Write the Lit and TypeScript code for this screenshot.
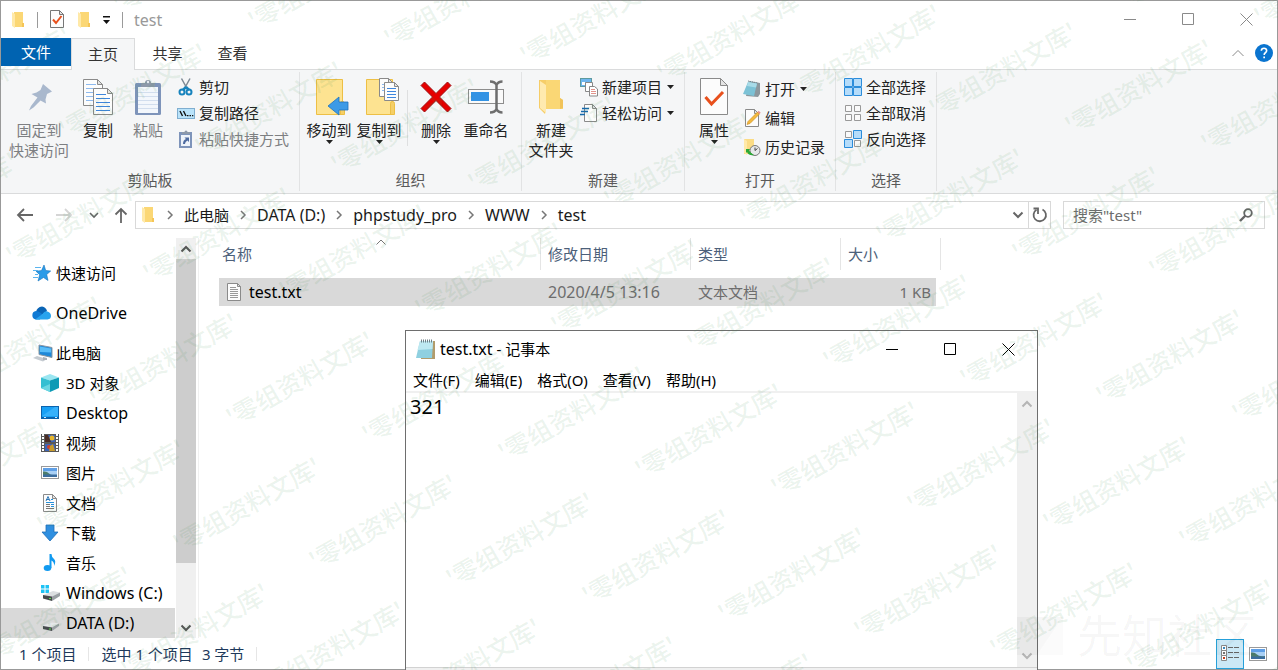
import { LitElement, html, svg, css, nothing, TemplateResult, SVGTemplateResult } from "lit";
import { customElement, property } from "lit/decorators.js";

/* ---------- icon drawings: [viewBox width, viewBox height, shapes] ---------- */
type Drawing = [number, number, SVGTemplateResult];

const page = (x: number, y: number, w: number, h: number, fold: number, stroke = "#8a8a8a") => svg`
  <path d="M${x} ${y}H${x + w - fold}L${x + w} ${y + fold}V${y + h}H${x}Z" fill="#fcfcfc" stroke=${stroke}/>
  <path d="M${x + w - fold} ${y}V${y + fold}H${x + w}Z" fill="#e4e4e4" stroke=${stroke}/>`;

const landscape = (x: number, y: number, w: number, h: number) => svg`
  <rect x=${x} y=${y} width=${w} height=${h} fill="#fff" stroke="#9a9a9a"/>
  <rect x=${x + 1.5} y=${y + 1.5} width=${w - 3} height=${h - 3} fill="#a9d0f5"/>
  <rect x=${x + 1.5} y=${y + 1.5} width=${w - 3} height="3" fill="#5f9fe6"/>
  <path d="M${x + 1.5} ${y + 5}q4 -.5 6 2t${w - 9} 1.500V${y + h - 3.5}H${x + 1.5}Z" fill="#4d7d6c"/>
  <rect x=${x + 1.5} y=${y + h - 4} width=${w - 3} height="2.500" fill="#3b6d9e"/>`;

const ICONS: Record<string, Drawing> = {
  folder: [16, 18, svg`
    <path d="M4 1h9v13l1 1v1H4z" fill="#fbd775"/>
    <path d="M2 1l3 2v14l-3-2z" fill="#ffe9a8"/>
    <path d="M12 12h2v4h-2z" fill="#f5c557"/>`],
  checkDoc: [16, 19, svg`
    ${page(1.5, 0.5, 13, 17, 4, "#777")}
    <path d="M4 9.500l3 3.500 5.500-7" fill="none" stroke="#e8501c" stroke-width="2"/>`],
  caret: [7, 4, svg`<path d="M0 0h7l-3.500 4z" fill="#222"/>`],
  quickCaret: [8, 8, svg`<path d="M0 0h7v1.500H0zM0 4h7L3.500 8z" fill="#111"/>`],
  minimize: [13, 13, svg`<path d="M0 6.500h12" stroke="currentColor"/>`],
  maximize: [13, 13, svg`<path d="M.5.5h11v11H.5z" fill="none" stroke="currentColor"/>`],
  close: [13, 13, svg`<path d="M.5.5l12 12M12.500.5l-12 12" stroke="currentColor" fill="none"/>`],
  chevUp: [12, 8, svg`<path d="M.5 7L6 1.500 11.500 7" fill="none" stroke="currentColor"/>`],
  sorted: [10, 6, svg`<path d="M.5 5.500L5 1l4.500 4.500" fill="none" stroke="currentColor"/>`],
  scrollUp: [12, 8, svg`<path d="M1.500 6.500L6 2l4.500 4.500" fill="none" stroke="currentColor" stroke-width="2"/>`],
  scrollDown: [12, 8, svg`<path d="M1.500 1.500L6 6l4.500-4.500" fill="none" stroke="currentColor" stroke-width="2"/>`],
  recent: [10, 8, svg`<path d="M1 2l4 4 4-4" fill="none" stroke="currentColor" stroke-width="1.600"/>`],
  crumb: [6, 10, svg`<path d="M1 1l4 4-4 4" fill="none" stroke="currentColor" stroke-width="1.500"/>`],
  help: [18, 18, svg`
    <circle cx="9" cy="9" r="9" fill="#0a74cf"/>
    <path d="M6.300 6.800q.2-2.500 2.700-2.500t2.700 2.300q0 1.300-1.300 2.100T9.200 11" fill="none" stroke="#fff" stroke-width="1.600"/>
    <path d="M8.300 12.500h1.700v1.700H8.300z" fill="#fff"/>`],
  pin: [28, 28, svg`
    <path d="M18 1l9 7.500-3 1.500-2 1-1.500 5.500.5 4-5.500-3-7 7-4.500 3L6 23l6.500-8.500L6.500 11l5-1.500 4-2.500z" fill="#a9b8cd"/>`],
  copy: [32, 37, svg`
    ${page(1.5, 0.5, 19, 26, 5)}
    <path d="M4 5.500h10M4 9.500h14M4 13.500h8M4 17.500h8M4 21.500h8" stroke="#8db9ee"/>
    ${page(11.5, 9.5, 19, 26, 5)}
    <path d="M14 15.500h10M14 19.500h14M14 23.500h14M14 27.500h14M14 31.500h14" stroke="#3e86dd"/>`],
  paste: [28, 37, svg`
    <rect x="1" y="4" width="26" height="32" rx="1.500" fill="#7e94ba"/>
    <rect x="4" y="8" width="20" height="26" fill="#f3f7fc"/>
    <path d="M4 13.500h20M4 17.500h20M4 21.500h20M4 25.500h20M4 29.500h20" stroke="#d2deee"/>
    <path d="M7 4h4a3 3 0 016 0h4v4H7z" fill="#8d99aa"/><circle cx="14" cy="3" r="1.200" fill="#e7ebf1"/>`],
  cut: [18, 18, svg`
    <path d="M4.500.5l5.500 10M13 .5l-5.500 10" stroke="#7d8994" stroke-width="1.500" fill="none"/>
    <path d="M9 9l-3 3M9 9l3 3" stroke="#1783bd" stroke-width="2.500"/>
    <circle cx="5" cy="14" r="2.500" fill="none" stroke="#1783bd" stroke-width="2"/>
    <circle cx="12" cy="14" r="2.500" fill="none" stroke="#1783bd" stroke-width="2"/>`],
  copyPath: [18, 18, svg`
    <rect x=".5" y="4.500" width="17" height="10" fill="#b9e3fa" stroke="#7faed0"/>
    <path d="M3 7l2.500 5M6.500 7L9 12" stroke="#111" stroke-width="1.400"/>
    <path d="M10 11h1.500v1.200H10zM12.500 11H14v1.200h-1.500zM15 11h1.300v1.200H15z" fill="#111"/>`],
  pasteLink: [18, 18, svg`
    <rect x="2" y="2" width="13" height="16" fill="#7e94ba"/>
    <rect x="4" y="5" width="9" height="11" fill="#eef3fa"/>
    <path d="M5 2h2.500a1.500 1.500 0 013 0H13v2H5z" fill="#8d99aa"/>
    <path d="M6 14q0-4 3-5L7.500 7.500H12V12l-1.500-1.500Q8 11.500 8 14z" fill="#4e6ba0"/>`],
  moveTo: [28, 38, svg`
    <path d="M1.500 1.500h26v35h-26z" fill="#fde391" stroke="#edbf45"/>
    <path d="M25.500 36.500v-11q0-2 2-2t2 2v11z" fill="#f5cf67" stroke="#edbf45"/>
    <path d="M33 24v8h-9v5L13 28l11-9v5z" fill="#3d9ae6" stroke="#1f72bd" stroke-width=".8"/>`],
  copyTo: [28, 38, svg`
    <path d="M1.500 1.500h26v35h-26z" fill="#fde391" stroke="#edbf45"/>
    <path d="M25.500 36.500v-11q0-2 2-2t2 2v11z" fill="#f5cf67" stroke="#edbf45"/>
    ${page(14.5, 0.5, 13, 18, 4)}
    <path d="M17 6.500h8M17 9.500h8M17 12.500h8" stroke="#8db9ee"/>
    ${page(19.5, 4.5, 14, 18, 4)}
    <path d="M22 10.500h9M22 13.500h9M22 16.500h9M22 19.500h9" stroke="#3e86dd"/>`],
  remove: [32, 32, svg`
    <path d="M4.500 1L16 12.500 27.500 1 31 4.500 19.500 16 31 27.500 27.500 31 16 19.500 4.500 31 1 27.500 12.500 16 1 4.500z" fill="#e60000" stroke="#9c0f12"/>`],
  rename: [36, 34, svg`
    <rect x=".5" y="9.500" width="35" height="14" fill="#fafafa" stroke="#8d8d8d"/>
    <rect x="3" y="12" width="18" height="9" fill="#3393e4"/>
    <path d="M22 1.500q5 0 6.500 3.500 1.500-3.500 6-3.500M22 32.500q5 0 6.500-3.500 1.500 3.500 6 3.500M28.500 4v26" fill="none" stroke="#6e6e6e" stroke-width="2.500"/>`],
  newFolder: [26, 36, svg`
    <path d="M8 1h14v18l3 2v9H8z" fill="#fad775"/>
    <path d="M22 19l3 2v8l-3 1z" fill="#f1c35a"/>
    <path d="M1 1h7v29l-1 5-6-6z" fill="#f6cd68"/>
    <path d="M2 2l6 4v28l-6-5z" fill="#ffeaaf"/>`],
  newItem: [18, 18, svg`
    <rect x=".5" y=".5" width="11" height="8" fill="#6fb6ee" stroke="#5d9a9f"/>
    <rect x="2" y="4" width="3" height="3" fill="#fff"/>
    <path d="M5.500 4.500h7v9h-7z" fill="#fff" stroke="#888"/>
    <path d="M9.500 8.500h5l3 2.500v7h-8z" fill="#fff" stroke="#888"/>
    <path d="M11 11.500h4M11 13.500h5M11 15.500h5" stroke="#e2938b"/>`],
  easyAccess: [18, 18, svg`
    ${page(4.5, 0.5, 12, 17, 4)}
    <path d="M2 4.500h7M1 7.500h7M0 10.500h5" stroke="#1669ad" stroke-width="1.300"/>`],
  properties: [30, 38, svg`
    ${page(1.5, 0.5, 27, 36, 7)}
    <path d="M6.500 19l6 7L24 14" fill="none" stroke="#e8501c" stroke-width="3"/>`],
  open: [18, 18, svg`
    <path d="M6 1l11 2v11l-2 3-12-1z" fill="#8c979d"/>
    <path d="M5 2l9 1.500-3 12.500L0 14z" fill="#7cc2d6"/>
    <path d="M5 2l9 1.500-1 4-9-1.500z" fill="#a8dbe8"/>
    <path d="M5 1l10 2" stroke="#6d8790" stroke-dasharray="1 1"/>`],
  edit: [18, 18, svg`
    ${page(2.5, 0.5, 13, 17, 4)}
    <path d="M4 15.500l1-3L14.500 3l2 2L7 14.500z" fill="#f3b93e" stroke="#c98a1e" stroke-width=".6"/>
    <path d="M14.500 3l1.200-1.200 2 2L16.500 5z" fill="#e88f8f"/>`],
  history: [18, 18, svg`
    <path d="M1 1h10v15H1z" fill="#fbdc85"/><path d="M1 1l3 2v14l-3-2z" fill="#ffe9a8"/>
    <circle cx="12" cy="12.500" r="5" fill="#e6e8ea" stroke="#777"/>
    <path d="M12 9.500v3l2.500-2" stroke="#444" fill="none"/>
    <path d="M3 11h4l-1 1.500q2 3 5 4.500-5 1-7-3L3 15z" fill="#2aa836"/>`],
  selectAll: [18, 18, svg`
    <path d="M.5.5h8v8h-8zM9.500.5h8v8h-8zM.5 9.500h8v8h-8zM9.500 9.500h8v8h-8z" fill="#b5dcfa" stroke="#2b8ddb"/>`],
  selectNone: [18, 18, svg`
    <path d="M1.500 1.500h6v6h-6zM10.500 1.500h6v6h-6zM1.500 10.500h6v6h-6zM10.500 10.500h6v6h-6z" fill="#fafafa" stroke="#999"/>`],
  invert: [18, 18, svg`
    <path d="M1.500 1.500h6v6h-6zM10.500 10.500h6v6h-6z" fill="#fafafa" stroke="#999"/>
    <path d="M9.500.5h8v8h-8zM.5 9.500h8v8h-8z" fill="#b5dcfa" stroke="#2b8ddb"/>`],
  back: [18, 14, svg`<path d="M16 7H1M7 1L1 7l6 6" fill="none" stroke="currentColor" stroke-width="1.800"/>`],
  forward: [18, 14, svg`<path d="M1 7h15M10 1l6 6-6 6" fill="none" stroke="currentColor" stroke-width="1.800"/>`],
  up: [14, 16, svg`<path d="M6 16V2M0.500 7.500L6 2l5.500 5.500" fill="none" stroke="currentColor" stroke-width="1.800"/>`],
  refresh: [16, 16, svg`
    <path d="M10.500 2.500a6.200 6.200 0 11-6 .3" fill="none" stroke="currentColor" stroke-width="1.800"/>
    <path d="M1.500 1.500h4.500V7" fill="none" stroke="currentColor" stroke-width="1.800"/>`],
  search: [14, 14, svg`
    <circle cx="9" cy="5" r="3.800" fill="none" stroke="currentColor" stroke-width="1.800"/>
    <path d="M6.500 7.500L1 13" stroke="currentColor" stroke-width="2.400"/>`],
  star: [20, 18, svg`
    <path d="M13 1l1.700 5.500 5 .5-4 3.500 1.300 6L12.500 13.500 7 17l1.700-6.300L5 7.200l5.500-.6z" fill="#2a9be8" stroke="#1673bd" stroke-width=".6"/>
    <path d="M4 3.500h6M2 6.500h5M4 10.500h3M2 13.500h5" stroke="#5bb4ee"/>`],
  onedrive: [20, 14, svg`
    <path d="M5 6q1-5 6-5.500Q15 1 16 5l-5 4z" fill="#0a64b5"/>
    <path d="M5 13.500a4.300 4.300 0 010-8.500q3 0 6 3l-2 5.500z" fill="#0f7ad4"/>
    <path d="M4 13.500L11.500 8q2-3.500 5-2.500 3.500 1 3.500 4.500 0 3-3.500 3.500z" fill="#27a3ee"/>`],
  pc: [20, 18, svg`
    <path d="M8 1l13 2.500v10L8 10.500z" fill="#1d88d8" stroke="#8a97a3"/>
    <path d="M9 2.500l11 2v4L9 8z" fill="#58bdf8"/>
    <path d="M2 14L6 12l10 3-4 2.500z" fill="#c5cbd1"/><path d="M12 13l4 1v2h-4z" fill="#a9b1b8"/>`],
  cube: [18, 18, svg`
    <path d="M0 3.500L9 0l9 3.500L9 6.500z" fill="#9be6f1"/><path d="M0 3.500l9 3V18l-9-4z" fill="#35bfd2"/><path d="M18 3.500l-9 3V18l9-4z" fill="#0d9ab5"/>
    <path d="M0 14l9-4v8z" fill="#6bd6e2"/>`],
  desktop: [18, 18, svg`
    <rect x=".5" y="2.500" width="17" height="12" fill="#18a0f5" stroke="#0b63ae"/><path d="M1 12L14 3h3v9z" fill="#37b1fb"/>
    <path d="M1 13.500h16" stroke="#0b63ae"/><path d="M3 13.500h2M14 13.500h2" stroke="#cfe8fa"/>`],
  video: [18, 18, svg`
    <rect width="18" height="18" fill="#5a5a5a"/>
    <path d="M2 0v18M16 0v18" stroke="#fff" stroke-width="2" stroke-dasharray="2 1"/>
    <rect x="4" y="1" width="10" height="7" fill="#3c64b8"/><rect x="4" y="10" width="10" height="7" fill="#3c64b8"/>
    <circle cx="11" cy="4" r="2.500" fill="#e7b62c"/><path d="M4 1h3l3 7H4z" fill="#4b2d25"/>
    <circle cx="8" cy="13" r="2" fill="#d0402b"/><path d="M9 12l3-2 2 7h-6z" fill="#c99b2a"/>`],
  picture: [18, 18, landscape(0.5, 2.5, 17, 12)],
  document: [18, 18, svg`
    ${page(2.5, 0.5, 13, 17, 4)}
    <path d="M5 7l2-4.500L9 7M5 5.500h3" stroke="#2f78b7" fill="none"/>
    <path d="M10 5.500h2M5 8.500h8M10 12.500h3M10 10.500h3" stroke="#2591db"/><path d="M5 10.500h4M5 12.500h4M5 14.500h8" stroke="#777"/>`],
  download: [18, 18, svg`<path d="M5 1h8v7h4l-8 9-8-9h4z" fill="#2f8fe0" stroke="#1f6fb8" stroke-width=".8"/>`],
  music: [18, 18, svg`
    <ellipse cx="6.500" cy="14" rx="3.800" ry="3" fill="#119af0"/><path d="M8.500 0h2q0 3 2.500 5t0 7q.5-4-2.500-5.500V14h-2z" fill="#119af0"/>`],
  driveC: [20, 18, svg`
    <path d="M0 1h3.500v3.500H0zM4.500 1H8v3.500H4.500zM0 5.500h3.500V9H0zM4.500 5.500H8V9H4.500z" fill="#1ec3f5"/>
    <path d="M2 11l10-4 7 1.500-8 4z" fill="#dcdfe1"/><path d="M2 11l9 1.500V17L2 14.500z" fill="#474a4d"/><path d="M11 12.500l8-4v3.500l-8 5z" fill="#9aa0a4"/><path d="M8 14h2v1H8z" fill="#5ce04b"/>`],
  driveD: [20, 18, svg`
    <path d="M2 12l9-3.500 7 1-7 4z" fill="#e6e8e9"/><path d="M2 12l9 1.500V17L2 15z" fill="#474a4d"/><path d="M11 13.500l7-4V12l-7 5z" fill="#9aa0a4"/><path d="M8 14.500h2v1H8z" fill="#5ce04b"/>`],
  textFile: [16, 19, svg`
    ${page(1.5, 0.5, 13, 17, 3)}
    <path d="M4 4.500h6M4 6.500h8M4 8.500h8M4 10.500h8M4 12.500h8M4 14.500h8" stroke="#999"/>`],
  notepad: [20, 21, svg`
    <path d="M5 2h14v18H5z" fill="#b29c6c"/>
    <path d="M4 2h13l-1 17H0z" fill="#8fd0e0"/><path d="M4 2h13l-.5 8-15 1z" fill="#bde8f1"/>
    <path d="M5 2h12" stroke="#6f7f86" stroke-width="3" stroke-dasharray="1 1"/>`],
  details: [19, 17, svg`
    <path d="M.5.5h5v5h-5zM.5 5.500h5v5h-5zM.5 10.500h5v5h-5z" fill="#fff" stroke="#888"/>
    <path d="M2 2h2v2H2z" fill="#3a8abf"/><path d="M2 7h2v2H2z" fill="#777"/><path d="M2 12h2v2H2z" fill="#c8401d"/>
    <path d="M7 2.500h5M13 2.500h5M7 7.500h5M13 7.500h5M7 12.500h5M13 12.500h5" stroke="#666"/>`],
  thumbnails: [18, 18, landscape(0.5, 2.5, 17, 13)],
};

const icon = (name: string): TemplateResult => {
  const [w, h, body] = ICONS[name];
  return html`<svg class="icon" width=${w} height=${h} viewBox="0 0 ${w} ${h}" aria-hidden="true">${body}</svg>`;
};

/* Strings without any Han characters are set one size up. */
const isLatin = (s: string) => /^[\x20-\x7e]+$/.test(s);

const base = css`
  *, *::before, *::after { box-sizing: border-box; }
  .icon { display: block; flex: none; overflow: visible; }
  .latin { font-size: 16px; }
  button {
    font: inherit; color: inherit; background: none; border: 0; padding: 0; margin: 0;
    display: flex; align-items: center; white-space: nowrap; flex: none;
  }
  input, textarea { font: inherit; color: inherit; border: 0; padding: 0; margin: 0; background: none; outline: 0; }
`;

/* ---------- ribbon ---------- */
type Small = { icon: string; text: string; menu?: boolean; off?: boolean };
type Big = { icon: string; lines: string[]; menu?: boolean; off?: boolean; wide?: boolean; split?: boolean };
type Group = { title: string; big: Big[]; small: Small[]; airy?: boolean };

const GROUPS: Group[] = [
  {
    title: "剪贴板",
    big: [
      { icon: "pin", lines: ["固定到", "快速访问"], off: true, wide: true },
      { icon: "copy", lines: ["复制"] },
      { icon: "paste", lines: ["粘贴"], off: true },
    ],
    small: [
      { icon: "cut", text: "剪切" },
      { icon: "copyPath", text: "复制路径" },
      { icon: "pasteLink", text: "粘贴快捷方式", off: true },
    ],
  },
  {
    title: "组织",
    big: [
      { icon: "moveTo", lines: ["移动到"], menu: true },
      { icon: "copyTo", lines: ["复制到"], menu: true, split: true },
      { icon: "remove", lines: ["删除"], menu: true },
      { icon: "rename", lines: ["重命名"] },
    ],
    small: [],
  },
  {
    title: "新建",
    big: [{ icon: "newFolder", lines: ["新建", "文件夹"] }],
    small: [
      { icon: "newItem", text: "新建项目", menu: true },
      { icon: "easyAccess", text: "轻松访问", menu: true },
    ],
  },
  {
    title: "打开",
    airy: true,
    big: [{ icon: "properties", lines: ["属性"], menu: true }],
    small: [
      { icon: "open", text: "打开", menu: true },
      { icon: "edit", text: "编辑" },
      { icon: "history", text: "历史记录" },
    ],
  },
  {
    title: "选择",
    big: [],
    small: [
      { icon: "selectAll", text: "全部选择" },
      { icon: "selectNone", text: "全部取消" },
      { icon: "invert", text: "反向选择" },
    ],
  },
];

@customElement("ribbon-bar")
export class RibbonBar extends LitElement {
  static styles = [base, css`
    :host { display: flex; height: 125px; background: #f5f6f7; border-top: 1px solid #dadbdc; border-bottom: 1px solid #dadbdc; padding: 2px 0; overflow: hidden; }
    .group { display: flex; flex-direction: column; border-right: 1px solid #e2e3e4; padding: 2px 10px 1px 4px; flex: none; }
    .body { display: flex; flex: 1; align-items: flex-start; }
    .title { text-align: center; line-height: 20px; padding-left: 6px; color: #5a5a5a; }
    .big { flex-direction: column; width: 50px; line-height: 20px; color: #222; }
    .big.wide { width: 68px; }
    .art { height: 46px; display: flex; align-items: center; }
    .divider { width: 1px; height: 56px; margin: 16px 3px 0; background: #dedfe0; }
    .smalls { display: flex; flex-direction: column; margin-left: 4px; }
    .small { height: 26px; gap: 4px; color: #222; }
    .airy .small { height: 29px; }
    .off { color: #7d7f82; }
    .small .menu { margin-left: 1px; }
  `];

  render() {
    return GROUPS.map((g) => html`
      <section class="group ${g.airy ? "airy" : ""}" aria-label=${g.title}>
        <div class="body">
          ${g.big.map((b) => html`
            <button class="big ${b.off ? "off" : ""} ${b.wide ? "wide" : ""}" ?disabled=${b.off}>
              <span class="art">${icon(b.icon)}</span>
              ${b.lines.map((l) => html`<span>${l}</span>`)}
              ${b.menu ? icon("caret") : nothing}
            </button>
            ${b.split ? html`<span class="divider"></span>` : nothing}`)}
          ${g.small.length ? html`<div class="smalls">
            ${g.small.map((s) => html`
              <button class="small ${s.off ? "off" : ""}" ?disabled=${s.off}>
                ${icon(s.icon)}<span>${s.text}</span>${s.menu ? html`<span class="menu">${icon("caret")}</span>` : nothing}
              </button>`)}
          </div>` : nothing}
        </div>
        <div class="title">${g.title}</div>
      </section>`);
  }
}

/* ---------- folder tree ---------- */
type Place = { icon: string; text: string; top?: boolean; current?: boolean };
const PLACES: Place[] = [
  { icon: "star", text: "快速访问", top: true },
  { icon: "onedrive", text: "OneDrive", top: true },
  { icon: "pc", text: "此电脑", top: true },
  { icon: "cube", text: "3D 对象" },
  { icon: "desktop", text: "Desktop" },
  { icon: "video", text: "视频" },
  { icon: "picture", text: "图片" },
  { icon: "document", text: "文档" },
  { icon: "download", text: "下载" },
  { icon: "music", text: "音乐" },
  { icon: "driveC", text: "Windows (C:)" },
  { icon: "driveD", text: "DATA (D:)", current: true },
];

@customElement("folder-tree")
export class FolderTree extends LitElement {
  static styles = [base, css`
    :host { display: flex; flex: none; width: 198px; border-right: 1px solid #f0f0f0; min-height: 0; }
    .places { list-style: none; margin: 0; padding: 20px 0 0; width: 174px; overflow: hidden; }
    .place { display: flex; align-items: center; height: 30px; padding-left: 40px; color: #000; text-decoration: none; white-space: nowrap; }
    .top { padding-left: 30px; }
    .top.gap { margin-bottom: 10px; }
    .current { background: #d9d9d9; }
    .slot { width: 25px; flex: none; }
    .bar { width: 20px; margin-left: 1px; background: #f0f0f0; display: flex; flex-direction: column; color: #555; }
    .step { height: 21px; justify-content: center; }
    .track { flex: 1; }
    .thumb { height: 85%; background: #cdcdcd; }
  `];

  render() {
    return html`
      <ul class="places">
        ${PLACES.map((p) => html`
          <li><a href="#" class="place ${p.top ? "top" : ""} ${p.top && p.icon !== "pc" ? "gap" : ""} ${p.current ? "current" : ""} ${isLatin(p.text) ? "latin" : ""}">
            <span class="slot">${icon(p.icon)}</span>${p.text}</a></li>`)}
      </ul>
      <div class="bar">
        <button class="step" aria-label="向上滚动">${icon("scrollUp")}</button>
        <div class="track"><div class="thumb"></div></div>
        <button class="step" aria-label="向下滚动">${icon("scrollDown")}</button>
      </div>`;
  }
}

/* ---------- notepad window ---------- */
@customElement("notepad-window")
export class NotepadWindow extends LitElement {
  @property() name = "";
  @property() content = "";

  static styles = [base, css`
    :host { display: flex; flex-direction: column; background: #fff; border: 1px solid #6e6e6e; border-bottom: 0; color: #000; }
    .titlebar { display: flex; align-items: center; height: 36px; padding-left: 10px; }
    .caption { flex: 1; padding-left: 4px; }
    .ctl { width: 58px; height: 36px; justify-content: center; }
    .menus { display: flex; height: 26px; align-items: center; gap: 15px; padding: 2px 0 0 7px; border-bottom: 2px solid #f0f0f0; }
    .edit { display: flex; flex: 1; min-height: 0; }
    .text { flex: 1; resize: none; padding: 0 4px; font-size: 20px; line-height: 28px; }
    .bar { width: 20px; background: #f0f0f0; display: flex; flex-direction: column; justify-content: space-between; color: #b5b5b5; }
    .step { height: 22px; justify-content: center; }
    .foot { height: 3px; border-top: 1px solid #d2d2d2; background: #f0f0f0; }
  `];

  render() {
    return html`
      <div class="titlebar">
        ${icon("notepad")}<span class="caption"><span class="latin">${this.name}</span> - 记事本</span>
        <button class="ctl" aria-label="最小化">${icon("minimize")}</button>
        <button class="ctl" aria-label="最大化">${icon("maximize")}</button>
        <button class="ctl" aria-label="关闭">${icon("close")}</button>
      </div>
      <nav class="menus">
        ${["文件(F)", "编辑(E)", "格式(O)", "查看(V)", "帮助(H)"].map((m) => html`<button>${m}</button>`)}
      </nav>
      <div class="edit">
        <textarea class="text" aria-label="文本" spellcheck="false" .value=${this.content}></textarea>
        <div class="bar">
          <button class="step" aria-label="向上滚动">${icon("scrollUp")}</button>
          <button class="step" aria-label="向下滚动">${icon("scrollDown")}</button>
        </div>
      </div>
      <div class="foot"></div>`;
  }
}

/* ---------- tiled diagonal mark over the whole screen ---------- */
@customElement("tiled-mark")
export class TiledMark extends LitElement {
  static styles = css`
    :host { position: absolute; inset: 0; pointer-events: none; overflow: hidden; }
    .sheet { display: block; width: 100%; height: 100%; }
    .mark { font: 500 25px/1 "Noto Sans CJK SC", sans-serif; fill: #3c8c4b; fill-opacity: 0.1; }
    .site { font: 400 45px/1 "Noto Sans CJK SC", sans-serif; fill: #000; fill-opacity: 0.04; }
  `;

  render() {
    const spots: [number, number][] = [];
    for (let row = -3; row < 7; row++) {
      for (let col = -10; col < 14; col++) {
        const x = Math.round(66 + col * 136.2 - row * 52.7);
        const y = Math.round(140 + col * 17.5 + row * 126.3);
        if (x > -130 && x < 1280 && y > 6 && y < 760) spots.push([x, y]);
      }
    }
    return html`<svg class="sheet" aria-hidden="true">
      ${spots.map(([x, y]) => svg`<text class="mark" transform="translate(${x} ${y}) rotate(-29.5)">'零组资料文库'</text>`)}
      <path d="M1017 617h46l-26 38h-20z" fill="#000" fill-opacity=".03"/>
      <path d="M1063 617v38h-26z" fill="#000" fill-opacity=".015"/>
      <text class="site" x="1077" y="653">先知社区</text>
    </svg>`;
  }
}

/* ---------- the file explorer ---------- */
@customElement("app-root")
export class AppRoot extends LitElement {
  static styles = [base, css`
    :host {
      display: block; position: relative; height: 100vh; overflow: hidden; background: #fff;
      font-family: "Noto Sans", "Noto Sans CJK SC", sans-serif; font-size: 15px; line-height: 20px; color: #000;
    }
    .window { display: flex; flex-direction: column; height: 100%; border: 1px solid #999; }
    .titlebar { display: flex; align-items: center; height: 37px; padding: 0 2px 0 9px; color: #999; }
    .rule { width: 1px; height: 16px; background: #9a9a9a; }
    .quick { display: flex; align-items: center; gap: 11px; flex: 1; }
    .ctl { width: 58px; height: 36px; justify-content: center; color: #8a8a8a; }
    .tabs { display: flex; height: 32px; margin-bottom: -1px; position: relative; z-index: 1; color: #333; }
    .tab { width: 65px; justify-content: center; padding-bottom: 2px; }
    .file { width: 70px; height: 28px; padding: 0; background: #0063b1; color: #fff; }
    .active { width: 64px; background: #f5f6f7; border: 1px solid #dadbdc; border-bottom: 0; }
    .tools { margin-left: auto; display: flex; align-items: center; gap: 11px; padding: 0 4px 2px 0; color: #8a8a8a; }
    .address { display: flex; align-items: center; height: 44px; padding: 0 12px 2px 16px; flex: none; color: #666; }
    .navs { display: flex; align-items: center; width: 118px; gap: 16px; }
    .navs .last { padding-right: 4px; }
    .navs .dim { color: #d5d5d5; }
    .box { display: flex; align-items: center; height: 28px; border: 1px solid #d9d9d9; }
    .path { flex: 1; padding-left: 4px; }
    .crumbs { display: flex; align-items: center; flex: 1; gap: 11px; color: #1a1a1a; }
    .crumbs .icon { color: #777; }
    .crumbs a { color: inherit; text-decoration: none; white-space: nowrap; }
    .drop { padding: 0 4px; }
    .refresh { height: 26px; width: 22px; justify-content: center; border-left: 1px solid #d9d9d9; }
    .find { width: 202px; margin-left: 12px; padding: 0 11px 0 9px; }
    .query { flex: 1; min-width: 0; }
    .query::placeholder { color: #6d6d6d; opacity: 1; }
    .main { display: flex; flex: 1; min-height: 0; }
    .files { border-spacing: 0; margin-left: 20px; table-layout: fixed; width: 722px; height: 68px; align-self: flex-start; }
    .files th { padding: 0 0 8px; font-weight: 400; text-align: left; color: #4c607a; width: 150px; }
    .files th:first-child { width: 322px; }
    .files th:last-child { width: 100px; }
    .head { height: 32px; display: flex; align-items: center; border-right: 1px solid #e5e5e5; padding-left: 7px; }
    .head.first { padding-left: 3px; display: grid; grid-template-columns: 1fr auto 1fr; }
    .head .icon { align-self: start; margin-top: 1px; color: #777; }
    .files td { height: 28px; padding: 0 0 0 7px; background: #d9d9d9; color: #6d6d6d; line-height: 20px; }
    .files td:last-child { text-align: right; padding-right: 5px; border-right: 5px solid #fff; }
    .fname { display: flex; align-items: center; gap: 7px; color: #000; }
    .status { display: flex; align-items: center; height: 31px; padding: 0 10px 0 18px; color: #1e395b; flex: none; }
    .status .sep { width: 1px; height: 14px; background: #e6e6e6; margin: 0 12px; }
    .status .size { margin-left: 9px; }
    .views { margin-left: auto; display: flex; align-items: center; height: 100%; gap: 5px; }
    .view { height: 30px; }
    .view.on { width: 28px; justify-content: center; background: #cbe8f6; border: 1px solid #26a0da; }
    .notepad { position: absolute; left: 405px; top: 330px; width: 633px; bottom: 0; }
  `];

  render() {
    return html`
      <main class="window">
        <header class="titlebar">
          <div class="quick">
            ${icon("folder")}<span class="rule"></span>
            <button aria-label="属性">${icon("checkDoc")}</button>
            <button aria-label="新建文件夹">${icon("folder")}</button>
            <button aria-label="自定义快速访问工具栏">${icon("quickCaret")}</button>
            <span class="rule"></span><span class="latin">test</span>
          </div>
          <button class="ctl" aria-label="最小化">${icon("minimize")}</button>
          <button class="ctl" aria-label="最大化">${icon("maximize")}</button>
          <button class="ctl" aria-label="关闭">${icon("close")}</button>
        </header>
        <nav class="tabs">
          <button class="tab file">文件</button>
          <button class="tab active">主页</button>
          <button class="tab">共享</button>
          <button class="tab">查看</button>
          <div class="tools">
            <button aria-label="折叠功能区">${icon("chevUp")}</button>
            <button aria-label="帮助">${icon("help")}</button>
          </div>
        </nav>
        <ribbon-bar></ribbon-bar>
        <div class="address">
          <div class="navs">
            <button aria-label="后退" class="last">${icon("back")}</button>
            <button aria-label="前进" class="dim">${icon("forward")}</button>
            <button aria-label="最近位置">${icon("recent")}</button>
            <button aria-label="上移">${icon("up")}</button>
          </div>
          <div class="box path">
            <div class="crumbs">
              ${icon("folder")}
              ${["此电脑", "DATA (D:)", "phpstudy_pro", "WWW", "test"].map((c) => html`${icon("crumb")}<a href="#" class=${isLatin(c) ? "latin" : ""}>${c}</a>`)}
            </div>
            <button class="drop" aria-label="以前的位置">${icon("scrollDown")}</button>
            <button class="refresh" aria-label="刷新">${icon("refresh")}</button>
          </div>
          <label class="box find">
            <input class="query" type="text" aria-label="搜索" placeholder='搜索"test"' />${icon("search")}
          </label>
        </div>
        <div class="main">
          <folder-tree></folder-tree>
          <table class="files">
            <thead><tr>
              <th><div class="head first">名称${icon("sorted")}</div></th>
              <th><div class="head">修改日期</div></th>
              <th><div class="head">类型</div></th>
              <th><div class="head">大小</div></th>
            </tr></thead>
            <tbody><tr>
              <td><span class="fname latin">${icon("textFile")}test.txt</span></td>
              <td class="latin">2020/4/5 13:16</td><td>文本文档</td><td>1 KB</td>
            </tr></tbody>
          </table>
        </div>
        <footer class="status">
          <span>1 个项目</span><span class="sep"></span>
          <span>选中 1 个项目</span><span class="size">3 字节</span><span class="sep"></span>
          <div class="views">
            <button class="view on" aria-label="详细信息">${icon("details")}</button>
            <button class="view" aria-label="大缩略图">${icon("thumbnails")}</button>
          </div>
        </footer>
      </main>
      <notepad-window class="notepad" name="test.txt" content="321"></notepad-window>
      <tiled-mark></tiled-mark>`;
  }
}
